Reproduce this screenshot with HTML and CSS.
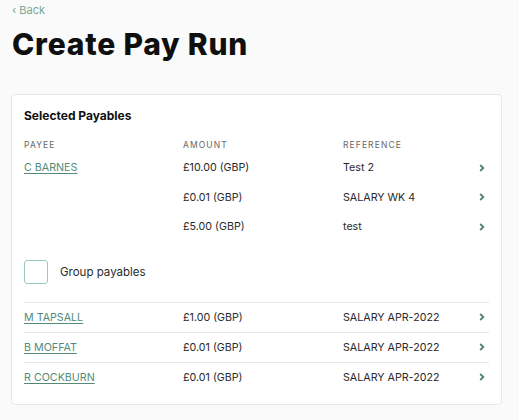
FILE: index.html
```html
<!DOCTYPE html>
<html>
<head>
<meta charset="utf-8">
<link rel="stylesheet" href="styles.css">
</head>
<body>
<div class="page">
  <a class="back" href="#">&#8249; Back</a>
  <h1 class="title">Create Pay Run</h1>
  <section class="card">
    <h2 class="card-title">Selected Payables</h2>
    <div class="grid head">
      <div>PAYEE</div>
      <div>AMOUNT</div>
      <div>REFERENCE</div>
      <div></div>
    </div>
    <div class="grid row">
      <div><a class="link" href="#">C BARNES</a></div>
      <div>£10.00 (GBP)</div>
      <div>Test 2</div>
      <div class="chev"><svg width="6" height="8" viewBox="0 0 6 8"><path d="M1.2 1 L4.3 4 L1.2 7" fill="none" stroke="#4d8270" stroke-width="1.8"/></svg></div>
    </div>
    <div class="grid row">
      <div></div>
      <div>£0.01 (GBP)</div>
      <div>SALARY WK 4</div>
      <div class="chev"><svg width="6" height="8" viewBox="0 0 6 8"><path d="M1.2 1 L4.3 4 L1.2 7" fill="none" stroke="#4d8270" stroke-width="1.8"/></svg></div>
    </div>
    <div class="grid row">
      <div></div>
      <div>£5.00 (GBP)</div>
      <div>test</div>
      <div class="chev"><svg width="6" height="8" viewBox="0 0 6 8"><path d="M1.2 1 L4.3 4 L1.2 7" fill="none" stroke="#4d8270" stroke-width="1.8"/></svg></div>
    </div>
    <label class="group">
      <span class="box"></span>
      <span>Group payables</span>
    </label>
    <div class="list">
      <div class="grid row line">
        <div><a class="link" href="#">M TAPSALL</a></div>
        <div>£1.00 (GBP)</div>
        <div>SALARY APR-2022</div>
        <div class="chev"><svg width="6" height="8" viewBox="0 0 6 8"><path d="M1.2 1 L4.3 4 L1.2 7" fill="none" stroke="#4d8270" stroke-width="1.8"/></svg></div>
      </div>
      <div class="grid row line">
        <div><a class="link" href="#">B MOFFAT</a></div>
        <div>£0.01 (GBP)</div>
        <div>SALARY APR-2022</div>
        <div class="chev"><svg width="6" height="8" viewBox="0 0 6 8"><path d="M1.2 1 L4.3 4 L1.2 7" fill="none" stroke="#4d8270" stroke-width="1.8"/></svg></div>
      </div>
      <div class="grid row line">
        <div><a class="link" href="#">R COCKBURN</a></div>
        <div>£0.01 (GBP)</div>
        <div>SALARY APR-2022</div>
        <div class="chev"><svg width="6" height="8" viewBox="0 0 6 8"><path d="M1.2 1 L4.3 4 L1.2 7" fill="none" stroke="#4d8270" stroke-width="1.8"/></svg></div>
      </div>
    </div>
  </section>
</div>
</body>
</html>
```
FILE: styles.css
```css
* { box-sizing: border-box; }
html, body { margin: 0; padding: 0; }
body {
  background: #fafafa;
  font-family: Inter, "Noto Sans", sans-serif;
  color: #1f1f1f;
}
.page {
  padding: 3px 17px 0 11px;
}
.back {
  display: block;
  margin-left: 1px;
  font-size: 11px;
  line-height: 14px;
  color: #7aa797;
  text-decoration: none;
}
.title {
  margin: 9px 0 0 1px;
  font-size: 30px;
  line-height: 36px;
  font-weight: 800;
  letter-spacing: 0.8px;
  color: #0f0f0f;
}
.card {
  margin-top: 32px;
  background: #fff;
  border: 1px solid #e2e9e6;
  border-radius: 4px;
  padding: 13px 12px 12px 12px;
}
.card-title {
  margin: 0;
  font-size: 12px;
  line-height: 16px;
  font-weight: 700;
  color: #111;
}
.grid {
  display: grid;
  grid-template-columns: 159px 160px 1fr 10px;
  align-items: center;
}
.head {
  margin-top: 15px;
  font-size: 8.5px;
  line-height: 12px;
  letter-spacing: 1.1px;
  color: #666;
}
.row {
  height: 29.5px;
  font-size: 10.7px;
  color: #2a2a2a;
}
.head + .row { margin-top: 2px; }
.link {
  color: #538a76;
  text-decoration: underline;
  text-underline-offset: 2px;
}
.chev {
  display: flex;
  justify-content: flex-start;
  align-items: center;
}
.chev svg { display: block; }
.group {
  display: flex;
  align-items: center;
  gap: 12px;
  margin-top: 18px;
  font-size: 11.5px;
  color: #2a2a2a;
}
.box {
  width: 24px;
  height: 24px;
  border: 1px solid #9cc8b8;
  border-radius: 3px;
  background: #fff;
}
.list {
  margin-top: 18px;
}
.line {
  height: 30px;
  border-top: 1px solid #e3eae7;
}
```
